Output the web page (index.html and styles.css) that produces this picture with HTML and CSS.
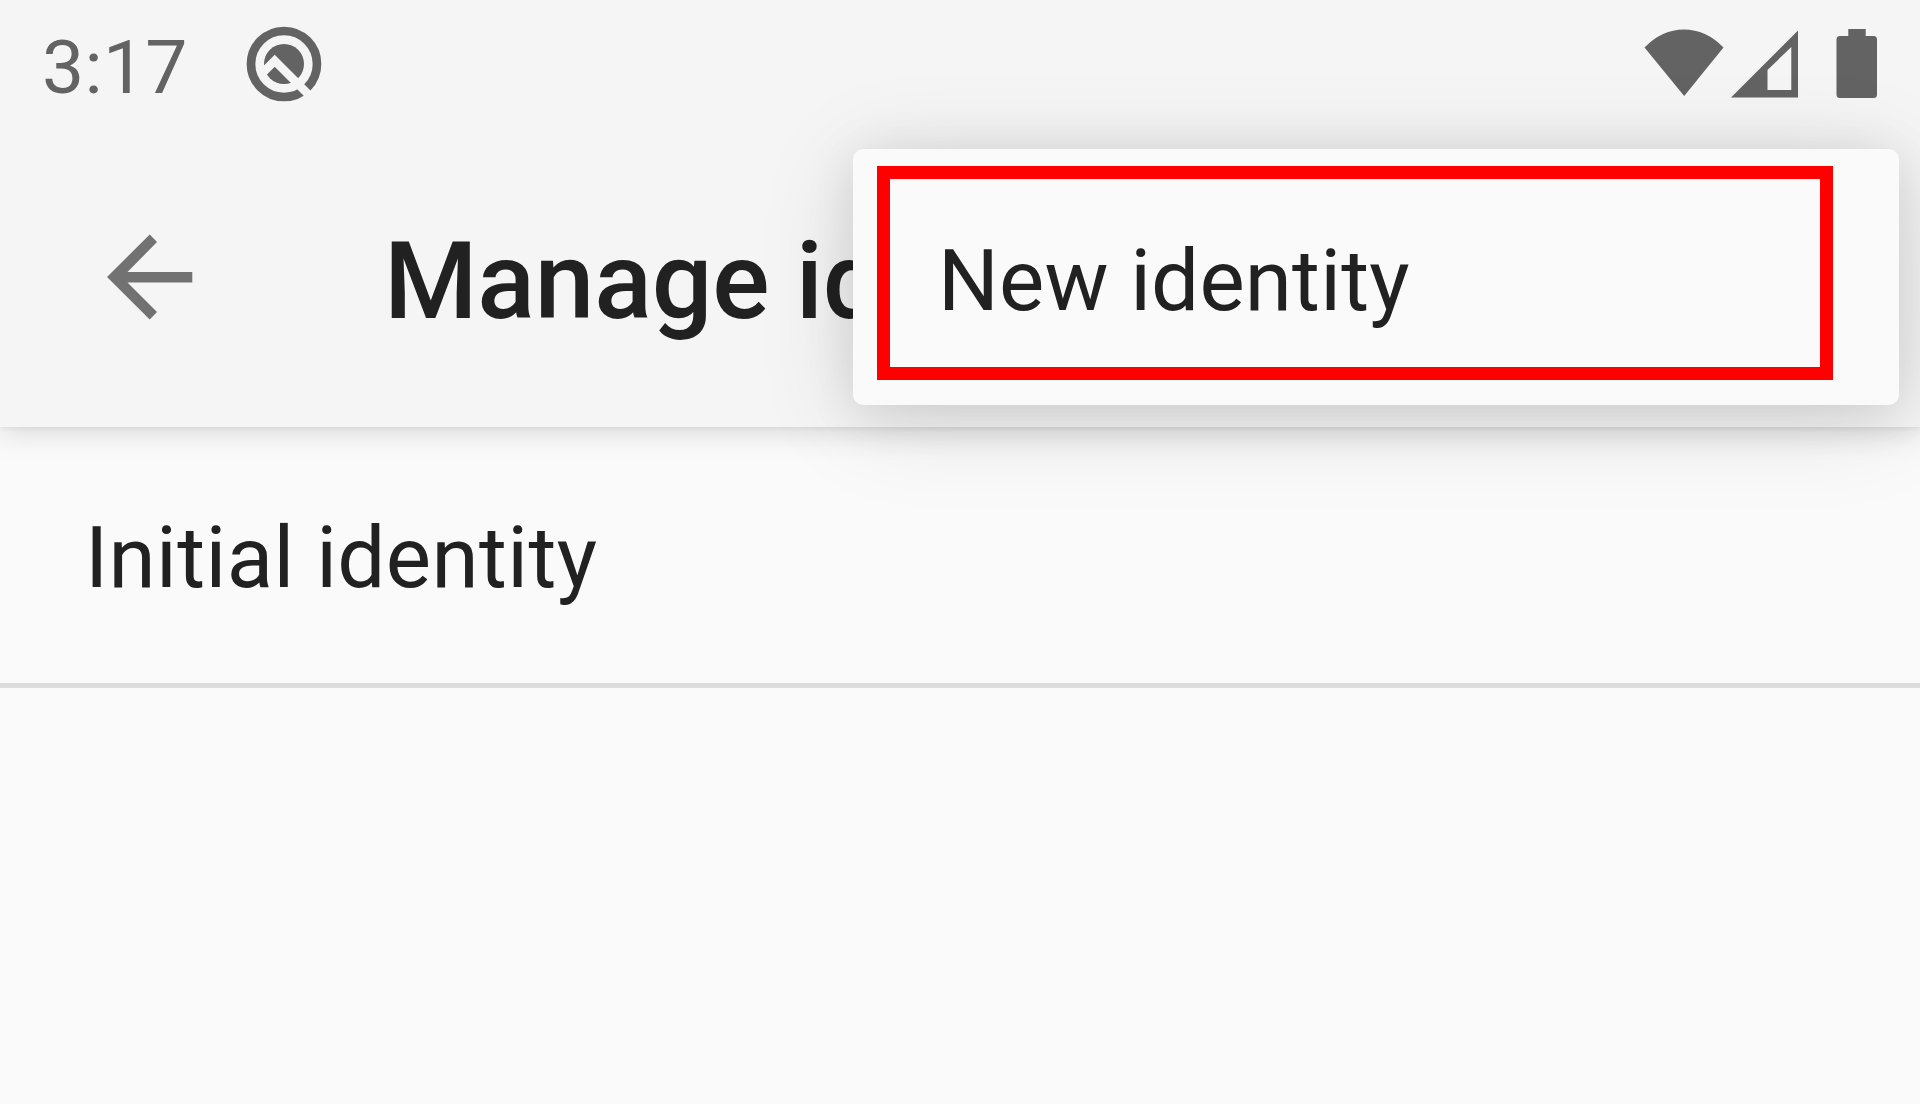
FILE: index.html
```html
<!DOCTYPE html>
<html lang="en">
<head>
<meta charset="utf-8">
<title>Manage identities</title>
<link rel="stylesheet" href="styles.css">
</head>
<body>
<div class="screen">
  <header class="app-header">
    <div class="status-bar">
      <span class="clock">3:17</span>
      <svg class="q-icon" width="76" height="76" viewBox="0 0 76 76">
        <circle class="q-ring" cx="38" cy="38" r="33"/>
        <circle class="q-disc" cx="38" cy="38" r="20"/>
        <path class="q-cut" d="M15 48.5 28.7 34.8 66 72.1"/>
      </svg>
      <svg class="system-icons" width="236" height="72" viewBox="0 0 236 72">
        <path d="M4.500 19.500Q22 1.500 44 1.500T83.500 19.500L44.200 68Z"/>
        <path fill-rule="evenodd" d="M91 69.500 158 2.500V69.500ZM127.500 42V62H151.300V19Z"/>
        <path d="M208.300 1H225.700V8H233.500Q237 8 237 11.500V66.500Q237 70 233.500 70H200Q196.500 70 196.500 66.500V11.500Q196.500 8 200 8H208.300Z"/>
      </svg>
    </div>
    <div class="toolbar">
      <svg class="back-icon" width="86" height="86" viewBox="0 0 86 86">
        <path d="M85.300 38V48.500H20.500L50 78 42.700 85.500 0 43 42.700.500 50 8 20.500 38Z"/>
      </svg>
      <h1 class="title">Manage identities</h1>
    </div>
  </header>
  <main class="identity-list">
    <div class="identity-row">Initial identity</div>
  </main>
  <div class="menu">
    <div class="menu-item">New identity</div>
  </div>
</div>
</body>
</html>
```
FILE: styles.css
```css
* {
  box-sizing: border-box;
}

body {
  margin: 0;
  background: #fafafa;
  color: #212121;
  font-family: Roboto, sans-serif;
}

.screen {
  position: relative;
  height: 1104px;
  overflow: hidden;
}

.app-header {
  position: relative;
  height: 427px;
  background: #f5f5f5;
  box-shadow: 0 2px 4px rgba(0, 0, 0, .05), 0 6px 28px rgba(0, 0, 0, .13);
}

.status-bar {
  display: flex;
  align-items: center;
  height: 127px;
  padding: 0 44px 0 42px;
  color: #636363;
  fill: #636363;
}

.clock {
  padding-top: 6px;
  font-size: 75px;
  line-height: 88px;
  letter-spacing: .3px;
}

.q-icon {
  margin-left: 58px;
}

.q-ring {
  fill: none;
  stroke: #636363;
  stroke-width: 8.700px;
}

.q-cut {
  fill: none;
  stroke: #f5f5f5;
  stroke-width: 8.500px;
}

.system-icons {
  margin-left: auto;
  overflow: visible;
}

.toolbar {
  display: flex;
  align-items: center;
  height: 300px;
  padding-left: 107px;
}

.back-icon {
  fill: #727272;
}

.title {
  width: 470px;
  margin: 0 0 0 191px;
  padding-top: 9px;
  overflow: hidden;
  font-size: 107px;
  font-weight: 500;
  line-height: 126px;
  letter-spacing: -.2px;
  white-space: nowrap;
}

.identity-row {
  height: 261px;
  padding: 81px 85px 0;
  border-bottom: 5px solid #dcdcdc;
  font-size: 85.300px;
  line-height: 100px;
  letter-spacing: .4px;
}

.menu {
  position: absolute;
  top: 149px;
  right: 21px;
  width: 1046px;
  height: 256px;
  padding: 17px 66px 25px 24px;
  border-radius: 10px;
  background: #fafafa;
  box-shadow: 0 14px 100px rgba(0, 0, 0, .12), 0 6px 50px rgba(0, 0, 0, .1);
}

.menu-item {
  height: 214px;
  padding: 52px 48px;
  border: 13px solid #f00;
  font-size: 85.300px;
  line-height: 100px;
  letter-spacing: .2px;
}
```
